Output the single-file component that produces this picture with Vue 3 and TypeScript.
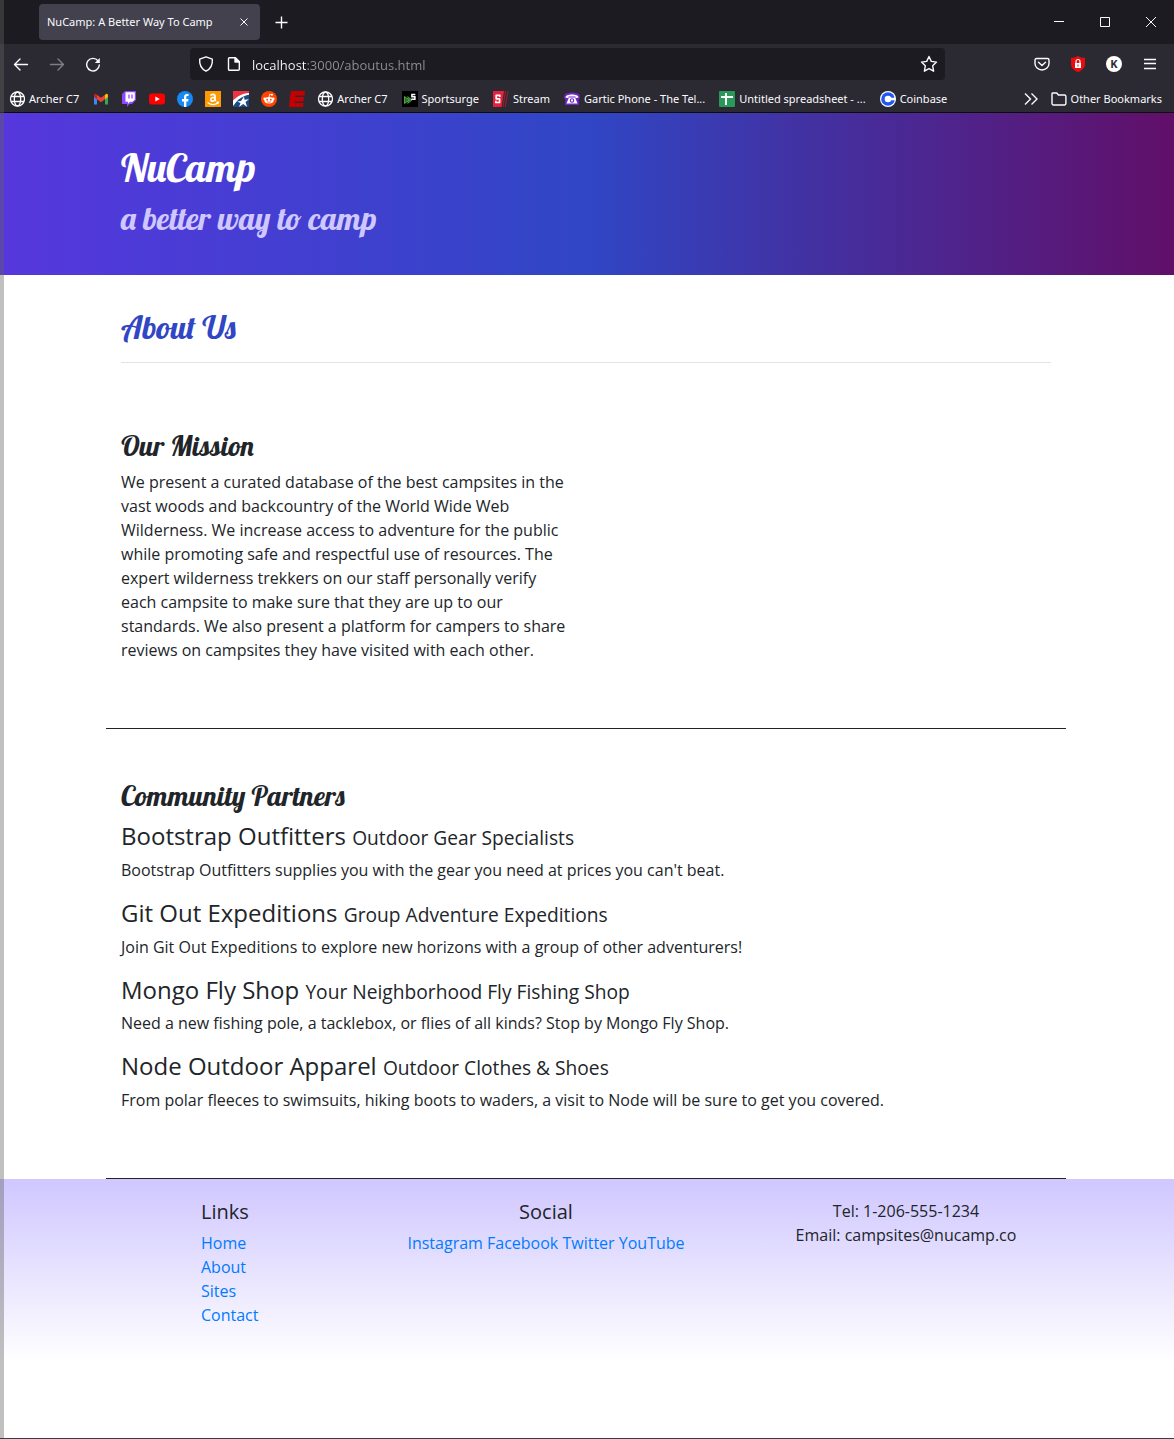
<script setup lang="ts">
import { ref } from 'vue'

interface Bookmark {
  icon: string
  label?: string
  name: string
}

interface Partner {
  name: string
  tagline: string
  text: string
}

const address = ref('localhost:3000/aboutus.html')

const bookmarks: Bookmark[] = [
  { icon: 'globe', label: 'Archer C7', name: 'Archer C7' },
  { icon: 'gmail', name: 'Gmail' },
  { icon: 'twitch', name: 'Twitch' },
  { icon: 'youtube', name: 'YouTube' },
  { icon: 'facebook', name: 'Facebook' },
  { icon: 'amazon', name: 'Amazon' },
  { icon: 'bank', name: 'Bank' },
  { icon: 'reddit', name: 'Reddit' },
  { icon: 'espn', name: 'ESPN' },
  { icon: 'globe', label: 'Archer C7', name: 'Archer C7' },
  { icon: 'sportsurge', label: 'Sportsurge', name: 'Sportsurge' },
  { icon: 'stream', label: 'Stream', name: 'Stream' },
  { icon: 'phone', label: 'Gartic Phone - The Tel...', name: 'Gartic Phone' },
  { icon: 'sheet', label: 'Untitled spreadsheet - ...', name: 'Untitled spreadsheet' },
  { icon: 'coinbase', label: 'Coinbase', name: 'Coinbase' },
]

const partners: Partner[] = [
  {
    name: 'Bootstrap Outfitters',
    tagline: 'Outdoor Gear Specialists',
    text: "Bootstrap Outfitters supplies you with the gear you need at prices you can't beat.",
  },
  {
    name: 'Git Out Expeditions',
    tagline: 'Group Adventure Expeditions',
    text: 'Join Git Out Expeditions to explore new horizons with a group of other adventurers!',
  },
  {
    name: 'Mongo Fly Shop',
    tagline: 'Your Neighborhood Fly Fishing Shop',
    text: 'Need a new fishing pole, a tacklebox, or flies of all kinds? Stop by Mongo Fly Shop.',
  },
  {
    name: 'Node Outdoor Apparel',
    tagline: 'Outdoor Clothes & Shoes',
    text: 'From polar fleeces to swimsuits, hiking boots to waders, a visit to Node will be sure to get you covered.',
  },
]

const siteLinks = ['Home', 'About', 'Sites', 'Contact']
const socialLinks = ['Instagram', 'Facebook', 'Twitter', 'YouTube']
</script>

<template>
  <div class="window">
    <div class="chrome">
      <div class="tab-strip">
        <div class="tab">
          <span class="tab-title">NuCamp: A Better Way To Camp</span>
          <button class="icon-button" type="button" aria-label="Close tab">
            <svg width="16" height="16" viewBox="0 0 16 16" class="line"><path d="M4.500 4.500l7 7M11.500 4.500l-7 7" /></svg>
          </button>
        </div>
        <button class="icon-button" type="button" aria-label="New tab">
          <svg width="16" height="16" viewBox="0 0 16 16" class="line thick"><path d="M8.500 2.500v12M2.500 8.500h12" /></svg>
        </button>
        <div class="window-controls">
          <button class="icon-button" type="button" aria-label="Minimize">
            <svg width="16" height="16" viewBox="0 0 16 16" class="line"><path d="M3 7.500h10" /></svg>
          </button>
          <button class="icon-button" type="button" aria-label="Maximize">
            <svg width="16" height="16" viewBox="0 0 16 16" class="line"><path d="M3.500 3.500h9v9h-9z" /></svg>
          </button>
          <button class="icon-button" type="button" aria-label="Close window">
            <svg width="16" height="16" viewBox="0 0 16 16" class="line"><path d="M3 3l10 10M13 3L3 13" /></svg>
          </button>
        </div>
      </div>

      <div class="toolbar">
        <div class="history">
          <button class="icon-button" type="button" aria-label="Back">
            <svg width="16" height="16" viewBox="0 0 16 16" class="line round"><path d="M14.500 8.500H1.500M7 3L1.500 8.500L7 14" /></svg>
          </button>
          <button class="icon-button faded" type="button" aria-label="Forward">
            <svg width="16" height="16" viewBox="0 0 16 16" class="line round"><path d="M1.500 8.500h13M9 3L14.500 8.500L9 14" /></svg>
          </button>
          <button class="icon-button" type="button" aria-label="Reload">
            <svg width="16" height="16" viewBox="0 0 16 16" class="line round">
              <path d="M13 4.800A6.300 6.300 0 1 0 14.300 9" />
              <path d="M14.800 2v5h-5z" fill="currentColor" stroke="none" />
            </svg>
          </button>
        </div>
        <div class="address">
          <svg width="16" height="16" viewBox="0 0 16 16" class="line round">
            <path d="M8 .8L14.300 3.200c.5 5.500-1.400 9.400-6.300 12C3.100 12.600 1.200 8.700 1.700 3.200z" />
          </svg>
          <svg width="16" height="16" viewBox="0 0 16 16" class="line round page-icon">
            <path d="M3.500 1.700h6l3.800 3.800v7.700a1 1 0 0 1-1 1h-8.800a1 1 0 0 1-1-1V2.700a1 1 0 0 1 1-1z" />
            <path d="M9 2v4h4z" fill="currentColor" />
          </svg>
          <input v-model="address" class="url" type="text" aria-label="Address" />
          <button class="icon-button" type="button" aria-label="Bookmark this page">
            <svg width="18" height="18" viewBox="0 0 18 18" class="line round">
              <path d="M9 1.500l2.300 4.900 5.200.7-3.800 3.700.9 5.400L9 13.700l-4.600 2.500.9-5.400L1.500 7.100l5.200-.7z" />
            </svg>
          </button>
        </div>
        <div class="tools">
          <button class="icon-button" type="button" aria-label="Save to Pocket">
            <svg width="16" height="16" viewBox="0 0 16 16" class="line round">
              <path d="M2.500 2.500h11a1.500 1.500 0 0 1 1.500 1.500v3.500a7 6.500 0 0 1-14 0V4a1.500 1.500 0 0 1 1.500-1.500z" />
              <path d="M4.500 6.200L8 9.500L11.500 6.200" />
            </svg>
          </button>
          <button class="icon-button" type="button" aria-label="Blocker">
            <svg width="16" height="16" viewBox="0 0 16 16">
              <path d="M8 0c2 1.300 4.500 1.800 7 1.800V8c0 4-3 6.500-7 8-4-1.500-7-4-7-8V1.800C3.500 1.800 6 1.300 8 0z" fill="#e80c10" />
              <path d="M5 7h6v5H5z" fill="#fff" />
              <path d="M6 7V5.500a2 2 0 0 1 4 0V7" fill="none" stroke="#fff" stroke-width="1.200" />
              <path d="M7.500 8.500h1v2h-1z" fill="#e80c10" />
            </svg>
          </button>
          <button class="icon-button account" type="button" aria-label="Account K">K</button>
          <button class="icon-button" type="button" aria-label="Menu">
            <svg width="16" height="16" viewBox="0 0 16 16" class="line thick"><path d="M2 3.500h12M2 7.500h12M2 12.500h12" /></svg>
          </button>
        </div>
      </div>

      <nav class="bookmarks" aria-label="Bookmarks">
        <a v-for="(item, index) in bookmarks" :key="index" href="#" class="bookmark" :aria-label="item.name">
          <svg width="16" height="16" viewBox="0 0 16 16">
            <g v-if="item.icon === 'globe'" fill="none" stroke="#fbfbfe" stroke-width="1.300">
              <circle cx="8.500" cy="8" r="7" />
              <ellipse cx="8.500" cy="8" rx="3.200" ry="7" />
              <path d="M2 5.500h13M2 10.500h13" />
            </g>
            <g v-else-if="item.icon === 'gmail'">
              <path d="M1 4v9.500h3V7z" fill="#4285f4" />
              <path d="M15 4v9.500h-3V7z" fill="#34a853" />
              <path d="M4 3.700v4.500l4 3 4-3V3.700L8 6.800z" fill="#ea4335" />
              <path d="M1 4.500V6l3 2.200V3.700l-1-.8C2 2.200 1 3 1 4.500z" fill="#c5221f" />
              <path d="M15 4.500V6l-3 2.200V3.700l1-.8c1-.7 2 .1 2 1.600z" fill="#fbbc04" />
            </g>
            <g v-else-if="item.icon === 'twitch'">
              <path d="M4 0h11v9l-4 4H8.500L6 16v-3H1V3z" fill="#9146ff" />
              <path d="M4.500 1.200h9.300v7.200l-2.300 2.300H9L7 12.700v-2H4.500z" fill="#fff" />
              <path d="M8 3.500v4M11 3.500v4" stroke="#9146ff" stroke-width="1.300" />
            </g>
            <g v-else-if="item.icon === 'youtube'">
              <rect x="0" y="2.500" width="16" height="11" rx="3" fill="#f00" />
              <path d="M6.300 5.500l4.500 2.500-4.500 2.500z" fill="#fff" />
            </g>
            <g v-else-if="item.icon === 'facebook'">
              <circle cx="8" cy="8" r="8" fill="#1689f5" />
              <path d="M7 16v-5.500H5V8h2V6.200C7 4.200 8.200 3 10 3l1.500.1v2h-1C9.600 5.100 9.300 5.600 9.300 6.300V8h2.200l-.4 2.500H9.300V16z" fill="#fff" />
            </g>
            <g v-else-if="item.icon === 'amazon'">
              <rect width="16" height="16" fill="#f90" />
              <path d="M5.600 4.600C6 3 10 2.600 10 5v3.500c0 .8.400 1.100.8 1.500M10 6.300C7 6.300 5.800 7 5.800 8.500c0 2.200 3.400 2 4.200 0" fill="none" stroke="#fff" stroke-width="1.700" />
              <path d="M2.500 11.500c3.500 2.500 7.500 2.500 10.500.5M11.300 11.300l2.200-.1-.6 2" fill="none" stroke="#fff" stroke-width="1.100" />
            </g>
            <g v-else-if="item.icon === 'bank'">
              <rect width="16" height="16" fill="#174a87" />
              <path d="M0 0h16v2.500C9 3.500 4 7 0 11z" fill="#ef3340" />
              <path d="M0 9.500C4 5.500 9 2.500 16 2v1.800C9 5 4 9 1 14l-1 1z" fill="#fff" />
              <path d="M11 5.500l.5 3.200 4.500-.5-3.500 2.800 1.700 5-4-3-4.200 3 1.500-4L4 10.500l4-.5z" fill="#fff" />
            </g>
            <g v-else-if="item.icon === 'reddit'">
              <circle cx="8" cy="8" r="8" fill="#ff4500" />
              <ellipse cx="8" cy="9.300" rx="4.600" ry="3.300" fill="#fff" />
              <circle cx="3.600" cy="7.800" r="1.200" fill="#fff" />
              <circle cx="12.400" cy="7.800" r="1.200" fill="#fff" />
              <circle cx="11" cy="3.800" r="1" fill="#fff" />
              <path d="M8 6.300l.7-3 2.300.5" fill="none" stroke="#fff" stroke-width=".8" />
              <circle cx="6.200" cy="8.700" r=".9" fill="#ff4500" />
              <circle cx="9.800" cy="8.700" r=".9" fill="#ff4500" />
              <path d="M6 10.700q2 1.400 4 0" fill="none" stroke="#ff4500" stroke-width=".7" />
            </g>
            <path
              v-else-if="item.icon === 'espn'"
              d="M2 0H16l-.5 4.500H6.500L6.300 6H15l-.7 4.500H5.800l-.2 1.500h9l-.6 4H0L1.100 6.500H.8z"
              fill="#c60000"
            />
            <g v-else-if="item.icon === 'sportsurge'">
              <rect width="16" height="16" fill="#000" />
              <path d="M2.500 5.500l5 3.500-5 3.500zM5.500 5.500L10 9l-4.500 3.500" fill="#2d6f2d" stroke="#61b953" stroke-width=".8" />
              <path d="M13.300 3.500H9.900v2.300h3V8.200H9.300" fill="none" stroke="#fff" stroke-width="1.500" />
            </g>
            <g v-else-if="item.icon === 'stream'">
              <path d="M0 0h11L8.500 16H0z" fill="#e9203b" />
              <path d="M12.500 0L10 16M15 0l-2.800 16" stroke="#8e2035" stroke-width="1.200" />
              <path d="M6.800 6V4.300H3.200v3.500h3.400v3.700H2.900V9.800" fill="none" stroke="#fff" stroke-width="1.700" stroke-linejoin="round" />
            </g>
            <g v-else-if="item.icon === 'phone'">
              <path d="M1 3q7-3 14 0l1 4-1.500 1.500L15 14H1l.5-5.500L0 7z" fill="#7126c8" />
              <path d="M1.500 6.500C1 2.500 15 2.500 14.500 6.500l-3 .8V5.500h-7v1.800z" fill="#fff" />
              <path d="M5 6.500h6l2.500 6h-11z" fill="#fff" />
              <circle cx="8" cy="9.500" r="1.700" fill="#fff" stroke="#7126c8" stroke-width="1.100" />
            </g>
            <g v-else-if="item.icon === 'sheet'">
              <rect width="16" height="16" rx="1" fill="#29995a" />
              <path d="M2 6h12M7 2v12" stroke="#fff" stroke-width="2" />
            </g>
            <g v-else>
              <circle cx="8" cy="8" r="8" fill="#fff" />
              <circle cx="8" cy="8" r="6.800" fill="#2156f5" />
              <circle cx="8" cy="8" r="3.300" fill="#fff" />
              <path d="M9 6.700h6.500v2.600H9z" fill="#fff" />
            </g>
          </svg>
          <span v-if="item.label" class="bookmark-label">{{ item.label }}</span>
        </a>
        <div class="bookmarks-end">
          <button class="icon-button" type="button" aria-label="More bookmarks">
            <svg width="16" height="16" viewBox="0 0 16 16" class="line thick"><path d="M2 2.500L7.500 8L2 13.500M8.500 2.500L14 8L8.500 13.500" /></svg>
          </button>
          <button class="bookmark other" type="button">
            <svg width="16" height="16" viewBox="0 0 16 16" class="line thick">
              <path d="M1.700 2h4l1.700 2h6a1.500 1.500 0 0 1 1.500 1.500v7a1.500 1.500 0 0 1-1.500 1.500H2.500A1.500 1.500 0 0 1 1 12.500V3a1 1 0 0 1 .7-1z" />
            </svg>
            <span>Other Bookmarks</span>
          </button>
        </div>
      </nav>
    </div>

    <header class="banner">
      <div class="container">
        <h1>NuCamp</h1>
        <h2>a better way to camp</h2>
      </div>
    </header>

    <main>
      <div class="container">
        <h2 class="page-title">About Us</h2>
        <hr />
      </div>
      <section class="container row">
        <div class="mission">
          <h3>Our Mission</h3>
          <p>
            We present a curated database of the best campsites in the vast woods and backcountry of the World Wide Web
            Wilderness. We increase access to adventure for the public while promoting safe and respectful use of
            resources. The expert wilderness trekkers on our staff personally verify each campsite to make sure that
            they are up to our standards. We also present a platform for campers to share reviews on campsites they have
            visited with each other.
          </p>
        </div>
      </section>
      <section class="container row">
        <h3>Community Partners</h3>
        <template v-for="partner in partners" :key="partner.name">
          <h4>{{ partner.name }} <small>{{ partner.tagline }}</small></h4>
          <p>{{ partner.text }}</p>
        </template>
      </section>
    </main>

    <footer class="site-footer">
      <div class="container footer-grid">
        <div class="links">
          <h5>Links</h5>
          <ul>
            <li v-for="link in siteLinks" :key="link"><a href="#">{{ link }}</a></li>
          </ul>
        </div>
        <div class="social">
          <h5>Social</h5>
          <template v-for="link in socialLinks" :key="link"><a href="#">{{ link }}</a>{{ ' ' }}</template>
        </div>
        <div class="contact">
          <div>Tel: 1-206-555-1234</div>
          <div>Email: campsites@nucamp.co</div>
        </div>
      </div>
    </footer>
    <div class="edge" aria-hidden="true"></div>
  </div>
</template>

<style>
body {
  margin: 0;
}
</style>

<style scoped>
.window {
  position: relative;
  box-sizing: border-box;
  display: flex;
  flex-direction: column;
  min-height: 100vh;
  border-bottom: 1px solid #3c3c40;
  background: #fff;
  color: #212529;
  font: 16px/24px 'Open Sans', 'Noto Sans', sans-serif;
}

*,
*::before {
  box-sizing: border-box;
}

.edge {
  position: absolute;
  top: 0;
  bottom: 0;
  left: 0;
  width: 4px;
  background: rgba(100, 98, 96, 0.4);
}

svg {
  display: block;
  flex: none;
}

.line {
  fill: none;
  stroke: currentColor;
  stroke-width: 1;
}

.thick {
  stroke-width: 1.4;
}

.round {
  stroke-width: 1.4;
  stroke-linecap: round;
  stroke-linejoin: round;
}

.icon-button {
  display: flex;
  flex: none;
  padding: 0;
  border: 0;
  background: none;
  color: #fbfbfe;
}

.faded {
  opacity: 0.4;
}

/* Browser frame */
.chrome {
  border-bottom: 1px solid #0c0c0d;
  background: #2b2a33;
  color: #fbfbfe;
  font-family: 'Noto Sans', 'Open Sans', sans-serif;
  font-size: 11px;
  line-height: 16px;
}

.tab-strip {
  display: flex;
  align-items: center;
  height: 44px;
  padding: 0 15px 0 39px;
  gap: 13px;
  background: #1c1b22;
}

.tab {
  display: flex;
  align-items: center;
  justify-content: space-between;
  width: 221px;
  height: 36px;
  padding: 0 8px;
  border-radius: 4px;
  background: #42414d;
}

.tab-title {
  white-space: nowrap;
}

.window-controls {
  display: flex;
  gap: 30px;
  margin-left: auto;
}

.toolbar {
  display: flex;
  align-items: center;
  height: 40px;
  padding: 0 16px 0 13px;
}

.history {
  display: flex;
  flex: none;
  gap: 20px;
  width: 177px;
}

.address {
  display: flex;
  flex: 1;
  align-items: center;
  min-width: 0;
  height: 32px;
  margin-right: 89px;
  padding: 0 7px 0 8px;
  border-radius: 4px;
  background: #1c1b22;
}

.page-icon {
  margin: 0 10px 0 12px;
}

.url {
  flex: 1;
  min-width: 0;
  padding: 2px 0 0;
  border: 0;
  outline: 0;
  background: linear-gradient(to right, #fbfbfe 54px, #8f8f98 54px);
  -webkit-background-clip: text;
  background-clip: text;
  color: transparent;
  font: 13px/20px 'Open Sans', 'Noto Sans', sans-serif;
}

.tools {
  display: flex;
  gap: 20px;
}

.account {
  align-items: center;
  justify-content: center;
  width: 16px;
  height: 16px;
  border-radius: 50%;
  background: #fff;
  color: #2b2a33;
  font: bold 11px/16px 'Noto Sans', sans-serif;
}

.bookmarks {
  display: flex;
  align-items: center;
  height: 28px;
  padding: 1px 12px 0 9px;
  gap: 12px;
}

.bookmark {
  display: flex;
  flex: none;
  align-items: center;
  gap: 4px;
  color: #fbfbfe;
  text-decoration: none;
  white-space: nowrap;
}

.bookmark-label {
  padding-right: 2px;
}

.other {
  padding: 0;
  border: 0;
  background: none;
  font: inherit;
}

.bookmarks-end {
  display: flex;
  gap: 12px;
  margin-left: auto;
}

/* Page */
.container {
  width: 100%;
  max-width: 960px;
  margin: 0 auto;
  padding: 0 15px;
}

.banner,
main,
.site-footer {
  padding-right: 2px;
}

h1,
h2,
h3,
h4,
h5 {
  margin: 0 0 8px;
  font-weight: 400;
  line-height: 1.2;
}

h1,
h2,
h3 {
  font-family: Lobster, 'Liberation Serif', serif;
}

h1 {
  font-size: 40px;
}

h2 {
  font-size: 32px;
}

h3 {
  font-size: 28px;
}

h4 {
  font-size: 24px;
}

h5 {
  font-size: 20px;
}

h4,
h5 {
  margin-bottom: 7px;
  padding-top: 1px;
}

small {
  font-size: 80%;
}

p {
  margin: 0 0 16px;
}

.banner {
  padding-top: 30px;
  padding-bottom: 30px;
  background: linear-gradient(to right, #5637dd, #3046c5 50%, #610f69);
  color: #fff;
}

.banner h2 {
  color: #cfc7ff;
}

main {
  padding-top: 33px;
}

.page-title {
  margin-bottom: 0;
  color: #3046c5;
}

hr {
  margin: 15px 0 16px;
  border: 0;
  border-top: 1px solid #e4e4e4;
}

.row {
  padding-top: 50px;
  padding-bottom: 50px;
  border-bottom: 1px solid #212529;
}

.mission {
  width: 50%;
  padding-right: 15px;
}

.site-footer {
  padding-top: 20px;
  padding-bottom: 20px;
  background: linear-gradient(to bottom, #cfc7ff, #fff);
}

.footer-grid {
  display: grid;
  grid-template-columns: 1fr 2fr 5fr 4fr;
  padding: 0;
}

.links {
  grid-column: 2;
  padding: 0 15px;
}

.social,
.contact {
  text-align: center;
}

ul {
  margin: 0 0 16px;
  padding: 0;
  list-style: none;
}

.site-footer a {
  color: #007bff;
  text-decoration: none;
}
</style>
